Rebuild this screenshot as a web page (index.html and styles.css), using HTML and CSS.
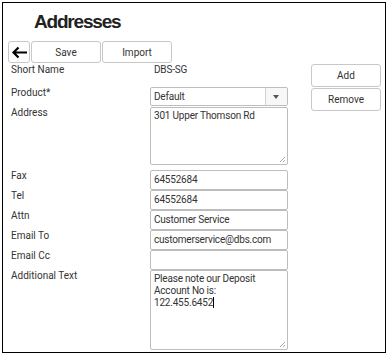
FILE: index.html
```html
<!DOCTYPE html>
<html lang="en">
<head>
    <meta charset="UTF-8">
    <meta name="viewport" content="width=device-width, initial-scale=1.0">
    <title>Addresses</title>
    <link rel="stylesheet" href="styles.css">
</head>
<body>
    <div class="frame">
        <h1>Addresses</h1>
        <div class="toolbar">
            <button class="btn back" title="Back">
                <svg width="17" height="13" viewBox="0 0 17 13"><path d="M16 6.5H2.5M7.5 1.5L2.5 6.5l5 5" fill="none" stroke="#000" stroke-width="2.2"/></svg>
            </button>
            <button class="btn tool">Save</button>
            <button class="btn tool">Import</button>
        </div>
        <div class="content">
            <div class="form">
                <div class="row short"><label>Short Name</label><span class="value">DBS-SG</span></div>
                <div class="row"><label>Product*</label>
                    <div class="select"><span>Default</span><span class="caret"></span></div>
                </div>
                <div class="row address"><label>Address</label>
                    <div class="area addr">301 Upper Thomson Rd<span class="grip"></span></div>
                </div>
                <div class="row"><label>Fax</label><div class="field">64552684</div></div>
                <div class="row"><label>Tel</label><div class="field">64552684</div></div>
                <div class="row"><label>Attn</label><div class="field">Customer Service</div></div>
                <div class="row"><label>Email To</label><div class="field">customerservice@dbs.com</div></div>
                <div class="row"><label>Email Cc</label><div class="field"></div></div>
                <div class="row"><label>Additional Text</label>
                    <div class="area extra">Please note our Deposit<br>Account No is:<br>122.455.6452<span class="cursor"></span><span class="grip"></span></div>
                </div>
            </div>
            <div class="side">
                <button class="btn side-btn">Add</button>
                <button class="btn side-btn">Remove</button>
            </div>
        </div>
    </div>
</body>
</html>
```

FILE: styles.css
```css
body {
    margin: 0;
    background: #fff;
    font-family: Roboto, "Liberation Sans", sans-serif;
    color: #333;
}
.frame {
    margin: 2px;
    width: 382px;
    height: 349px;
    border: 1.5px solid #000;
    box-sizing: content-box;
}
h1 {
    margin: 0;
    padding: 8px 0 0 31px;
    height: 30px;
    font-family: "Liberation Sans", Arial, sans-serif;
    font-size: 19px;
    font-weight: bold;
    letter-spacing: -1.2px;
    color: #222;
    line-height: 22px;
}
.toolbar {
    display: flex;
    gap: 1px;
    padding-left: 5px;
    height: 22px;
    margin-bottom: 1px;
}
.btn {
    background: #fff;
    border: 1px solid #c8c8c8;
    border-radius: 3px;
    font-family: Roboto, "Liberation Sans", sans-serif;
    font-size: 10px;
    color: #333;
    padding: 0;
    cursor: pointer;
}
.back {
    width: 22px;
    display: flex;
    align-items: center;
    justify-content: center;
}
.tool {
    width: 70px;
}
.content {
    display: flex;
}
.form {
    width: 286px;
    flex-shrink: 0;
    padding-left: 8px;
}
.row {
    display: flex;
    height: 20px;
}
.row label {
    width: 139px;
    font-size: 10px;
    line-height: 12px;
}
.row.short {
    height: 23px;
}
.value {
    font-size: 10px;
    line-height: 12px;
    padding-left: 4px;
    letter-spacing: -0.2px;
}
.select, .field, .area {
    width: 138px;
    box-sizing: border-box;
    border: 1px solid #bdbdbd;
    border-radius: 2px;
    font-size: 10px;
    letter-spacing: -0.2px;
    color: #333;
    padding: 0 3px;
}
.field {
    height: 20px;
    line-height: 18px;
}
.select {
    height: 19px;
    display: flex;
    align-items: center;
    justify-content: space-between;
    padding-right: 0;
}
.caret {
    width: 21px;
    height: 17px;
    border-left: 1px solid #d0d0d0;
    background: #f7f7f7;
    position: relative;
}
.caret::after {
    content: "";
    position: absolute;
    left: 7px;
    top: 7px;
    border-left: 3.5px solid transparent;
    border-right: 3.5px solid transparent;
    border-top: 4px solid #555;
}
.row.address {
    height: 63px;
}
.area {
    position: relative;
    padding-top: 2px;
    line-height: 12px;
}
.addr {
    height: 58px;
}
.row:last-child {
    height: 80px;
}
.extra {
    height: 80px;
}
.grip {
    position: absolute;
    right: 2px;
    bottom: 2px;
    width: 5px;
    height: 5px;
    background: linear-gradient(135deg, transparent 45%, #aaa 45%, #aaa 55%, transparent 55%, transparent 75%, #aaa 75%, #aaa 85%, transparent 85%);
}
.cursor {
    display: inline-block;
    width: 1px;
    height: 11px;
    background: #000;
    vertical-align: -2px;
}
.side {
    display: flex;
    flex-direction: column;
    gap: 1px;
    padding-left: 14px;
}
.side-btn {
    width: 70px;
    height: 23px;
}
```
